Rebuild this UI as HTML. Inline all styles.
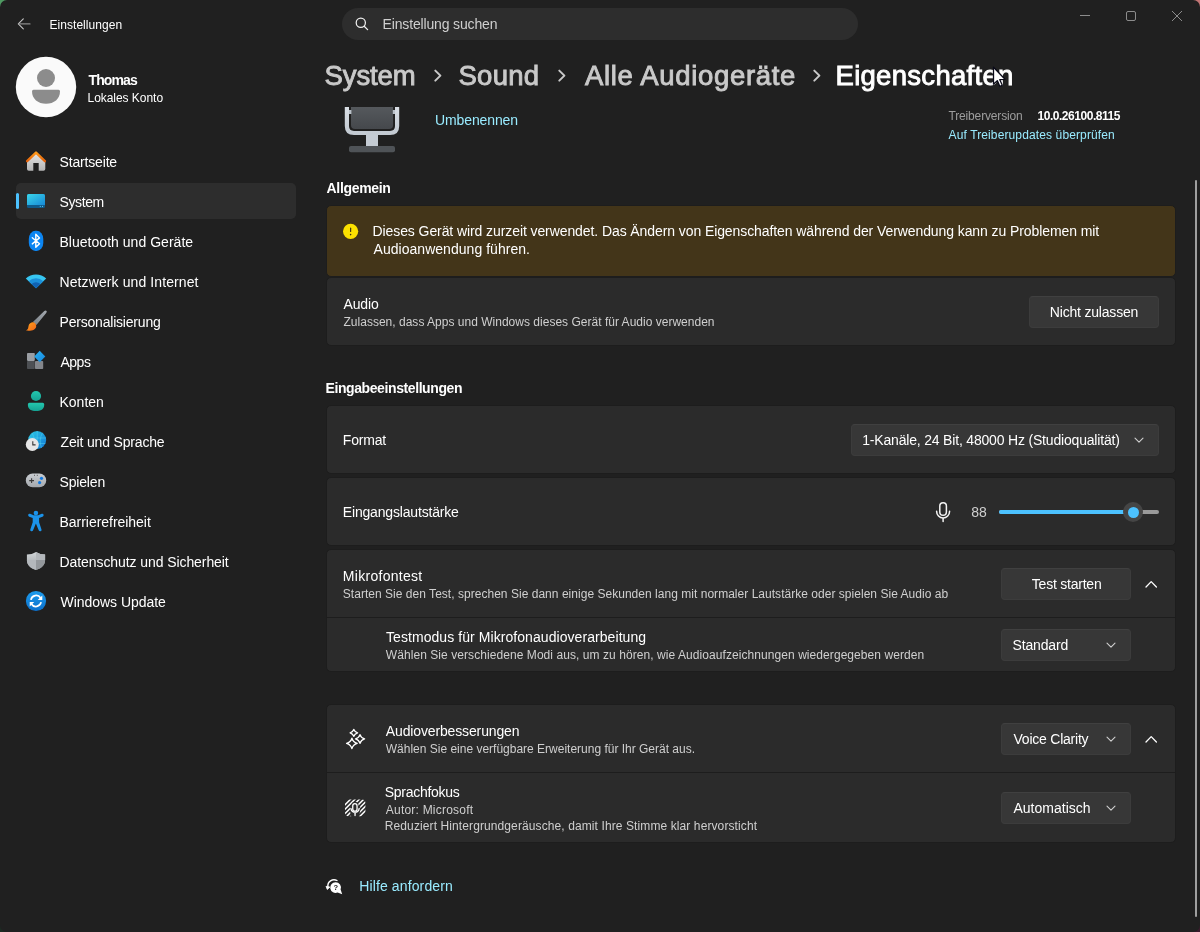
<!DOCTYPE html>
<html lang="de">
<head>
<meta charset="utf-8">
<title>Einstellungen</title>
<style>
html,body{margin:0;padding:0;width:1200px;height:932px;overflow:hidden;background:#202020;font-family:"Liberation Sans",sans-serif;}
#win{position:absolute;left:0;top:0;width:1200px;height:932px;background:#202020;border-radius:7px;overflow:hidden;}
.cn{position:absolute;width:10px;height:10px;}
.t{position:absolute;line-height:40px;white-space:pre;}
.a{position:absolute;}
.card{position:absolute;left:326px;width:850px;background:#2b2b2b;border:1px solid #1d1d1d;box-sizing:border-box;border-radius:5px;}
.btn{position:absolute;background:#373737;border-radius:4px;box-sizing:border-box;border:1px solid #3c3c3c;border-top-color:#404040;}
.div{position:absolute;left:327px;width:848px;height:1px;background:#1d1d1d;}
svg{position:absolute;overflow:visible;}
</style>
</head>
<body>
<div class="cn" style="left:0;top:0;background:#4f9a62"></div>
<div class="cn" style="right:0;top:0;background:#c27575"></div>
<div class="cn" style="left:0;bottom:0;background:#1c2a22"></div>
<div class="cn" style="right:0;bottom:0;background:#3a1a2c"></div>
<div id="win">
<!-- selected nav -->
<div class="a" style="left:16px;top:183px;width:280px;height:36px;border-radius:5px;background:#2d2d2d"></div>
<div class="a" style="left:16px;top:193px;width:3px;height:16px;border-radius:2px;background:#4cc2ff"></div>
<!-- search -->
<div class="a" style="left:342px;top:8px;width:516px;height:32px;border-radius:16px;background:#2d2d2d"></div>
<!-- cards -->
<div class="card" style="top:205px;height:72px;background:#433519"></div>
<div class="card" style="top:277px;height:69px"></div>
<div class="card" style="top:405px;height:69px"></div>
<div class="card" style="top:477px;height:69px"></div>
<div class="card" style="top:549px;height:123px"></div>
<div class="div" style="top:617px"></div>
<div class="card" style="top:704px;height:139px"></div>
<div class="div" style="top:772px"></div>
<!-- buttons -->
<div class="btn" style="left:1029px;top:296px;width:130px;height:32px"></div>
<div class="btn" style="left:851px;top:424px;width:308px;height:32px"></div>
<div class="btn" style="left:1001px;top:568px;width:130px;height:32px"></div>
<div class="btn" style="left:1001px;top:629px;width:130px;height:32px"></div>
<div class="btn" style="left:1001px;top:723px;width:130px;height:32px"></div>
<div class="btn" style="left:1001px;top:792px;width:130px;height:32px"></div>
<!-- slider -->
<div class="a" style="left:999px;top:510px;width:160px;height:4px;border-radius:2px;background:#9a9a9a"></div>
<div class="a" style="left:999px;top:510px;width:134px;height:4px;border-radius:2px;background:#4cc2ff"></div>
<div class="a" style="left:1123px;top:502px;width:20px;height:20px;border-radius:10px;background:#454545"></div>
<div class="a" style="left:1127.5px;top:506.5px;width:11px;height:11px;border-radius:6px;background:#4cc2ff"></div>
<!-- scrollbar -->
<div class="a" style="left:1195px;top:180px;width:2px;height:737px;border-radius:1px;background:#9f9f9f"></div>
<svg style="left:0;top:0;will-change:transform" width="1200" height="932" viewBox="0 0 1200 932">
<defs>
<linearGradient id="gRoof" x1="0" y1="0" x2="0" y2="1"><stop offset="0" stop-color="#ff9a1a"/><stop offset="1" stop-color="#e2600a"/></linearGradient>
<linearGradient id="gHouse" x1="0" y1="0" x2="0" y2="1"><stop offset="0" stop-color="#e6e6e6"/><stop offset="1" stop-color="#b4b4b4"/></linearGradient>
<linearGradient id="gSys" x1="0" y1="0" x2="1" y2="1"><stop offset="0" stop-color="#3ad6ea"/><stop offset="1" stop-color="#1789d6"/></linearGradient>
<linearGradient id="gGlobe" x1="0" y1="0" x2="1" y2="1"><stop offset="0" stop-color="#2ccbe4"/><stop offset="1" stop-color="#1277d6"/></linearGradient>
<linearGradient id="gTeal" x1="0" y1="0" x2="0" y2="1"><stop offset="0" stop-color="#23c7ae"/><stop offset="1" stop-color="#15a293"/></linearGradient>
<linearGradient id="gPad" x1="0" y1="0" x2="0" y2="1"><stop offset="0" stop-color="#c9cdd1"/><stop offset="1" stop-color="#a4a8ad"/></linearGradient>
<linearGradient id="gShield" x1="0" y1="0" x2="0" y2="1"><stop offset="0" stop-color="#d2d6d9"/><stop offset="1" stop-color="#9a9ea1"/></linearGradient>
<linearGradient id="gUpd" x1="0" y1="0" x2="0" y2="1"><stop offset="0" stop-color="#1d9cec"/><stop offset="1" stop-color="#0b6fcb"/></linearGradient>
<linearGradient id="gDia" x1="0" y1="0" x2="1" y2="1"><stop offset="0" stop-color="#2bb4f2"/><stop offset="1" stop-color="#1585de"/></linearGradient>
<linearGradient id="gMicB" x1="0" y1="0" x2="0" y2="1"><stop offset="0" stop-color="#5d6165"/><stop offset="1" stop-color="#45484c"/></linearGradient>
<linearGradient id="gMicU" x1="0" y1="0" x2="0" y2="1"><stop offset="0" stop-color="#dfe4ea"/><stop offset="1" stop-color="#c3cad2"/></linearGradient>
<linearGradient id="gBrush" x1="0" y1="0" x2="1" y2="1"><stop offset="0" stop-color="#ffa41c"/><stop offset="1" stop-color="#f0641a"/></linearGradient>
<linearGradient id="gHandle" x1="1" y1="0" x2="0" y2="1"><stop offset="0" stop-color="#a3a9af"/><stop offset="1" stop-color="#7b8288"/></linearGradient>
<clipPath id="cMic"><rect x="330" y="107" width="100" height="60"/></clipPath>
<clipPath id="cVF"><rect x="345" y="799.6" width="20.4" height="16.6" rx="4"/></clipPath>
</defs>
<!-- back arrow -->
<path d="M23.3 18.9 L18.3 23.9 L23.3 28.9" fill="none" stroke="#c8c8c8" stroke-width="1.1" stroke-linecap="round" stroke-linejoin="round"/>
<path d="M19 23.9 H30" fill="none" stroke="#8a8a8a" stroke-width="1.1" stroke-linecap="round"/>
<!-- avatar -->
<circle cx="46" cy="87" r="30.2" fill="#fafafa"/>
<circle cx="46" cy="78" r="9" fill="#8c8c8c"/>
<path d="M33.5 89.8 H58.5 Q60 89.8 60 91.3 C60 99 54 103.8 46 103.8 C38 103.8 32 99 32 91.3 Q32 89.8 33.5 89.8 Z" fill="#8c8c8c"/>
<!-- window controls -->
<path d="M1080 15.5 H1090" stroke="#8c8c8c" stroke-width="1"/>
<rect x="1126.5" y="11.5" width="9" height="9" rx="1.5" fill="none" stroke="#8c8c8c" stroke-width="1"/>
<path d="M1172 11 L1182 21 M1182 11 L1172 21" stroke="#8c8c8c" stroke-width="1"/>
<!-- search icon -->
<circle cx="360.8" cy="22.8" r="4.6" fill="none" stroke="#f0f0f0" stroke-width="1.25"/>
<path d="M364.2 26.2 L367.6 29.6" stroke="#f0f0f0" stroke-width="1.3" stroke-linecap="round"/>
<!-- home -->
<path d="M27 161 L36 153 L45.3 161 V169 Q45.3 170.8 43.5 170.8 H38.7 V163 H33.3 V170.8 H28.8 Q27 170.8 27 169 Z" fill="url(#gHouse)"/>
<path d="M27.1 161.2 L36 152.6 L44.9 161.2" fill="none" stroke="url(#gRoof)" stroke-width="2.4" stroke-linecap="round" stroke-linejoin="round"/>
<!-- system -->
<rect x="27" y="194" width="18" height="14" rx="1.6" fill="#0f5a8a"/>
<path d="M28.6 194 H43.4 Q45 194 45 195.6 V205 H27 V195.6 Q27 194 28.6 194 Z" fill="url(#gSys)"/>
<rect x="39.8" y="205.9" width="1" height="1" fill="#5ec8f0"/><rect x="42" y="205.9" width="1" height="1" fill="#5ec8f0"/>
<!-- bluetooth -->
<rect x="28.8" y="230.8" width="14.5" height="20.2" rx="6.6" ry="8.2" fill="#0c85f2"/>
<path d="M32.3 237.8 L39.5 243.8 L35.8 247.3 V234.3 L39.5 237.9 L32.3 243.9" fill="none" stroke="#fff" stroke-width="1.4" stroke-linejoin="round" stroke-linecap="round"/>
<!-- wifi -->
<path d="M36 288.3 L25.8 278.6 A14.6 14.6 0 0 1 46.2 278.6 Z" fill="#37c6f2"/>
<path d="M36 288.3 L28.7 281.3 A10.4 10.4 0 0 1 43.3 281.3 Z" fill="#1c8fda"/>
<path d="M36 288.3 L31.6 284.1 A6.2 6.2 0 0 1 40.4 284.1 Z" fill="#1162b2"/>
<!-- brush -->
<path d="M44.3 310.9 Q45.7 309.9 46.6 311 Q47.2 311.8 46.2 312.9 L36.4 325.1 L32.9 322.1 Z" fill="url(#gHandle)"/>
<path d="M31.6 322.4 C34 321.6 36.6 323.4 36.2 326.4 C35.8 329.6 32 331.2 26 330.6 C28.4 329.4 28.2 327.6 28.6 325.8 C29 323.8 30 322.9 31.6 322.4 Z" fill="url(#gBrush)"/>
<!-- apps -->
<rect x="27" y="353" width="7.8" height="7.9" rx="0.8" fill="#9a9ea3"/>
<rect x="27" y="361" width="7.8" height="8" rx="0.8" fill="#4d5054"/>
<rect x="35" y="361" width="8.2" height="8" rx="0.8" fill="#83868b"/>
<path d="M39.7 350.8 L45.3 356.5 L39.7 362.2 L34.2 356.5 Z" fill="url(#gDia)"/>
<!-- konten -->
<circle cx="36" cy="396" r="5.1" fill="url(#gTeal)"/>
<path d="M29.4 402.8 H42.7 Q44.2 402.8 44.2 404.3 V404.9 C44.2 409 40.6 411.1 36 411.1 C31.4 411.1 27.9 409 27.9 404.9 V404.3 Q27.9 402.8 29.4 402.8 Z" fill="url(#gTeal)"/>
<!-- zeit und sprache -->
<circle cx="37.2" cy="440" r="9" fill="url(#gGlobe)"/>
<path d="M28.4 438 H46 M37.2 431 V449 M29 443.5 H45.4 M32 432.7 Q36 440 33 448 M42.5 432.7 Q38.5 440 41.5 448" fill="none" stroke="#56d2ee" stroke-width="0.7" opacity="0.7"/>
<circle cx="32.3" cy="444.5" r="6.5" fill="#e6e6e6"/>
<path d="M32.8 441.2 V444.9 H35.6" fill="none" stroke="#3a3a3a" stroke-width="1.1"/>
<!-- spielen -->
<rect x="25.8" y="473.6" width="20.4" height="13.6" rx="6.8" fill="url(#gPad)"/>
<path d="M29.2 480.6 H34 M31.6 478.2 V483" stroke="#3c3c3c" stroke-width="1.1"/>
<circle cx="41.5" cy="478.3" r="1.6" fill="#1279e0"/><circle cx="39.6" cy="482.6" r="1.6" fill="#1279e0"/>
<rect x="34" y="474.8" width="1" height="1" fill="#555"/><rect x="36.8" y="474.8" width="1" height="1" fill="#555"/>
<!-- barrierefreiheit -->
<circle cx="35.9" cy="513" r="2.3" fill="#1b93ea"/>
<path d="M28.2 514.7 Q28.6 513.3 30.1 513.8 L33.6 515.3 H38.2 L41.7 513.8 Q43.2 513.3 43.6 514.7 Q43.9 516.1 42.5 516.7 L39.1 518.1 V522.3 L41.5 529.4 Q41.9 530.9 40.5 531.3 Q39.2 531.6 38.7 530.3 L35.9 523.4 L33.1 530.3 Q32.6 531.6 31.3 531.3 Q29.9 530.9 30.3 529.4 L32.7 522.3 V518.1 L29.3 516.7 Q27.9 516.1 28.2 514.7 Z" fill="#1b93ea"/>
<!-- shield -->
<path d="M36 551.9 C38.6 553.6 42 554.4 45.1 554.4 V560 C45.1 565 41.4 568.4 36 569.9 C30.6 568.4 26.9 565 26.9 560 V554.4 C30 554.4 33.4 553.6 36 551.9 Z" fill="url(#gShield)"/>
<path d="M36 551.9 C38.6 553.6 42 554.4 45.1 554.4 V560 H36 Z" fill="#b3b7bb"/>
<path d="M36 560 H26.9 C26.9 565 30.6 568.4 36 569.9 Z" fill="#b4b8bc"/><path d="M36 560 H45.1 C45.1 565 41.4 568.4 36 569.9 Z" fill="#94989c"/>
<!-- windows update -->
<circle cx="36" cy="601" r="10.1" fill="url(#gUpd)"/>
<path d="M30.9 599.8 A5.3 5.3 0 0 1 40.6 598 M41.1 602.2 A5.3 5.3 0 0 1 31.4 604" fill="none" stroke="#fff" stroke-width="1.7"/>
<path d="M42.3 595.4 V600 H37.7 Z M29.7 606.6 V602 H34.3 Z" fill="#fff"/>
<!-- breadcrumb chevrons -->
<g fill="none" stroke="#c9c9c9" stroke-width="2" stroke-linecap="round" stroke-linejoin="round">
<path d="M435.3 70.6 L440.4 75.6 L435.3 80.6"/><path d="M559.3 70.6 L564.4 75.6 L559.3 80.6"/><path d="M814.3 70.6 L819.4 75.6 L814.3 80.6"/>
</g>
<!-- big microphone image (clipped by header) -->
<g clip-path="url(#cMic)">
<rect x="351" y="96" width="42.1" height="33" rx="4" fill="url(#gMicB)"/>
<rect x="349" y="110" width="2.4" height="4" fill="#b9c0c8"/><rect x="392.8" y="110" width="2.4" height="4" fill="#b9c0c8"/>
<path d="M346.9 100 V126 Q346.9 133 354 133 H390 Q397.1 133 397.1 126 V100" fill="none" stroke="url(#gMicU)" stroke-width="4.2"/>
<rect x="366" y="134.5" width="12" height="12" fill="#c4cbd3"/>
<rect x="349" y="146" width="46" height="6.2" rx="2" fill="#4f5357"/>
</g>
<!-- warning icon -->
<circle cx="350.6" cy="231.3" r="7.6" fill="#fce100"/>
<rect x="350.05" y="227.6" width="1.15" height="4.4" rx="0.55" fill="#3a2f12"/><circle cx="350.62" cy="234.6" r="0.8" fill="#3a2f12"/>
<!-- dropdown chevrons -->
<g fill="none" stroke="#cfcfcf" stroke-width="1.1" stroke-linecap="round" stroke-linejoin="round">
<path d="M1135 438.2 L1139 442.2 L1143 438.2"/>
<path d="M1107 643.2 L1111 647.2 L1115 643.2"/>
<path d="M1107 737.2 L1111 741.2 L1115 737.2"/>
<path d="M1107 806.2 L1111 810.2 L1115 806.2"/>
</g>
<g fill="none" stroke="#ffffff" stroke-width="1.3" stroke-linecap="round" stroke-linejoin="round">
<path d="M1146 587 L1151.2 581.6 L1156.4 587"/>
<path d="M1146 742 L1151.2 736.6 L1156.4 742"/>
</g>
<!-- slider mic icon -->
<g fill="none" stroke="#f4f4f4" stroke-width="1.5" stroke-linecap="round">
<rect x="939.8" y="502.7" width="6.6" height="12.6" rx="3.3"/>
<path d="M936.6 511.2 A6.5 6.8 0 0 0 949.6 511.2"/>
<path d="M943.1 518.4 V521.4"/>
</g>
<!-- sparkle -->
<g fill="none" stroke="#fff" stroke-width="1.35" stroke-linejoin="round">
<path d="M353.8 729.4 Q354.6 732 357.6 732.8 Q354.6 733.6 353.8 736.4 Q353 733.6 350.1 732.8 Q353 732 353.8 729.4 Z"/>
<path d="M360 734.6 Q361 738 364.6 738.9 Q361 739.8 360 743.4 Q359 739.8 355.5 738.9 Q359 738 360 734.6 Z"/>
<path d="M351.9 738.2 Q353.1 742.2 357.2 743.4 Q353.1 744.6 351.9 748.6 Q350.7 744.6 346.6 743.4 Q350.7 742.2 351.9 738.2 Z"/>
</g>
<!-- voice focus -->
<mask id="mVF" maskUnits="userSpaceOnUse" x="340" y="795" width="30" height="26">
<rect x="345" y="799.6" width="20.4" height="16.6" rx="3.6" fill="#fff"/>
<rect x="351.4" y="801.7" width="7.1" height="11" rx="3.5" fill="#000"/>
<path d="M349.9 806.2 H360.2 V811 L358.6 817 H351.4 L349.9 811 Z" fill="#000"/>
</mask>
<path d="M319.80 830 L359.80 790 M324.20 830 L364.20 790 M328.60 830 L368.60 790 M333.00 830 L373.00 790 M337.40 830 L377.40 790 M341.80 830 L381.80 790 M346.20 830 L386.20 790" stroke="#fff" stroke-width="1.55" fill="none" mask="url(#mVF)"/>
<g fill="none" stroke="#fff" stroke-width="1.3" stroke-linecap="round">
<rect x="352.75" y="803.65" width="4.3" height="7.5" rx="2.15"/>
<path d="M350.9 808.3 A4.2 4.6 0 0 0 359.2 808.3"/>
<path d="M355.05 813.2 V815.5"/>
</g>
<!-- help icon -->
<path d="M335.6 882.2 A5.4 5.4 0 0 1 340.6 889.6 L342.2 894.2 L337.6 892.6 A5.4 5.4 0 1 1 335.6 882.2 Z" fill="#fff"/>
<path d="M337 880.5 A6.2 6.2 0 0 0 327.9 886.8" fill="none" stroke="#fff" stroke-width="1.4" stroke-linecap="round"/>
<path d="M326 886.3 L329.9 887.1 L327.3 889.5 Z" fill="#fff" stroke="#fff" stroke-width="0.8" stroke-linejoin="round"/>
<text x="335.7" y="890.3" font-family="Liberation Sans, sans-serif" font-size="7.5" font-weight="700" fill="#202020" text-anchor="middle">?</text>
</svg>

<div id="tx" style="position:absolute;left:0;top:0;width:1200px;height:932px;will-change:transform">
<span class="t" style="left:49.50px;top:5.00px;font-size:12px;font-weight:400;color:#ffffff;letter-spacing:0.042px">Einstellungen</span>
<span class="t" style="left:88.50px;top:60.00px;font-size:14px;font-weight:700;color:#ffffff;letter-spacing:-0.900px">Thomas</span>
<span class="t" style="left:87.50px;top:78.00px;font-size:12px;font-weight:400;color:#ffffff;letter-spacing:-0.042px">Lokales Konto</span>
<span class="t" style="left:59.50px;top:142.00px;font-size:14px;font-weight:400;color:#ffffff;letter-spacing:-0.167px">Startseite</span>
<span class="t" style="left:59.50px;top:182.00px;font-size:14px;font-weight:400;color:#ffffff;letter-spacing:-0.400px">System</span>
<span class="t" style="left:59.50px;top:222.00px;font-size:14px;font-weight:400;color:#ffffff;letter-spacing:0.026px">Bluetooth und Geräte</span>
<span class="t" style="left:59.50px;top:262.00px;font-size:14px;font-weight:400;color:#ffffff;letter-spacing:0.100px">Netzwerk und Internet</span>
<span class="t" style="left:59.50px;top:302.00px;font-size:14px;font-weight:400;color:#ffffff;letter-spacing:-0.200px">Personalisierung</span>
<span class="t" style="left:60.50px;top:342.00px;font-size:14px;font-weight:400;color:#ffffff;letter-spacing:-0.500px">Apps</span>
<span class="t" style="left:59.50px;top:382.00px;font-size:14px;font-weight:400;color:#ffffff;letter-spacing:0.000px">Konten</span>
<span class="t" style="left:60.50px;top:422.00px;font-size:14px;font-weight:400;color:#ffffff;letter-spacing:-0.167px">Zeit und Sprache</span>
<span class="t" style="left:59.50px;top:462.00px;font-size:14px;font-weight:400;color:#ffffff;letter-spacing:-0.167px">Spielen</span>
<span class="t" style="left:59.50px;top:502.00px;font-size:14px;font-weight:400;color:#ffffff;letter-spacing:-0.033px">Barrierefreiheit</span>
<span class="t" style="left:59.50px;top:542.00px;font-size:14px;font-weight:400;color:#ffffff;letter-spacing:-0.080px">Datenschutz und Sicherheit</span>
<span class="t" style="left:60.50px;top:582.00px;font-size:14px;font-weight:400;color:#ffffff;letter-spacing:-0.038px">Windows Update</span>
<span class="t" style="left:382.50px;top:4.00px;font-size:14px;font-weight:400;color:#cfcfcf;letter-spacing:-0.147px">Einstellung suchen</span>
<span class="t" style="left:324.50px;top:56.00px;font-size:27.5px;font-weight:400;color:#c9c9c9;letter-spacing:-0.100px;-webkit-text-stroke:0.9px #c9c9c9">System</span>
<span class="t" style="left:458.50px;top:56.00px;font-size:27.5px;font-weight:400;color:#c9c9c9;letter-spacing:0.250px;-webkit-text-stroke:0.9px #c9c9c9">Sound</span>
<span class="t" style="left:585.00px;top:56.00px;font-size:27.5px;font-weight:400;color:#c9c9c9;letter-spacing:0.667px;-webkit-text-stroke:0.9px #c9c9c9">Alle Audiogeräte</span>
<span class="t" style="left:835.50px;top:56.00px;font-size:27.5px;font-weight:400;color:#ffffff;letter-spacing:0.292px;-webkit-text-stroke:0.9px #ffffff">Eigenschaften</span>
<span class="t" style="left:435.00px;top:100.00px;font-size:14px;font-weight:400;color:#99ebff;letter-spacing:-0.111px">Umbenennen</span>
<span class="t" style="left:948.50px;top:96.00px;font-size:12px;font-weight:400;color:#9d9d9d;letter-spacing:-0.154px">Treiberversion</span>
<span class="t" style="left:1037.50px;top:96.00px;font-size:12px;font-weight:700;color:#ffffff;letter-spacing:-0.464px">10.0.26100.8115</span>
<span class="t" style="left:948.50px;top:115.30px;font-size:12px;font-weight:400;color:#99ebff;letter-spacing:0.125px">Auf Treiberupdates überprüfen</span>
<span class="t" style="left:326.50px;top:168.00px;font-size:14px;font-weight:700;color:#ffffff;letter-spacing:-0.312px">Allgemein</span>
<span class="t" style="left:372.50px;top:210.60px;font-size:14px;font-weight:400;color:#ffffff;letter-spacing:-0.087px">Dieses Gerät wird zurzeit verwendet. Das Ändern von Eigenschaften während der Verwendung kann zu Problemen mit</span>
<span class="t" style="left:373.50px;top:228.80px;font-size:14px;font-weight:400;color:#ffffff;letter-spacing:0.038px">Audioanwendung führen.</span>
<span class="t" style="left:343.50px;top:283.80px;font-size:14px;font-weight:400;color:#ffffff;letter-spacing:-0.125px">Audio</span>
<span class="t" style="left:343.50px;top:302.00px;font-size:12px;font-weight:400;color:#cfcfcf;letter-spacing:0.013px">Zulassen, dass Apps und Windows dieses Gerät für Audio verwenden</span>
<span class="t" style="left:1049.80px;top:292.00px;font-size:14px;font-weight:400;color:#ffffff;letter-spacing:-0.192px">Nicht zulassen</span>
<span class="t" style="left:325.50px;top:367.50px;font-size:14px;font-weight:700;color:#ffffff;letter-spacing:-0.405px">Eingabeeinstellungen</span>
<span class="t" style="left:342.80px;top:420.00px;font-size:14px;font-weight:400;color:#ffffff;letter-spacing:-0.200px">Format</span>
<span class="t" style="left:862.20px;top:420.00px;font-size:14px;font-weight:400;color:#ffffff;letter-spacing:-0.183px">1-Kanäle, 24 Bit, 48000 Hz (Studioqualität)</span>
<span class="t" style="left:342.80px;top:492.00px;font-size:14px;font-weight:400;color:#ffffff;letter-spacing:-0.176px">Eingangslautstärke</span>
<span class="t" style="left:971.30px;top:492.00px;font-size:14px;font-weight:400;color:#cfcfcf;letter-spacing:0.000px">88</span>
<span class="t" style="left:342.80px;top:556.00px;font-size:14px;font-weight:400;color:#ffffff;letter-spacing:0.291px">Mikrofontest</span>
<span class="t" style="left:342.80px;top:574.00px;font-size:12px;font-weight:400;color:#cfcfcf;letter-spacing:0.029px">Starten Sie den Test, sprechen Sie dann einige Sekunden lang mit normaler Lautstärke oder spielen Sie Audio ab</span>
<span class="t" style="left:1031.80px;top:564.00px;font-size:14px;font-weight:400;color:#ffffff;letter-spacing:-0.227px">Test starten</span>
<span class="t" style="left:386.00px;top:617.00px;font-size:14px;font-weight:400;color:#ffffff;letter-spacing:0.066px">Testmodus für Mikrofonaudioverarbeitung</span>
<span class="t" style="left:385.80px;top:635.00px;font-size:12px;font-weight:400;color:#cfcfcf;letter-spacing:0.067px">Wählen Sie verschiedene Modi aus, um zu hören, wie Audioaufzeichnungen wiedergegeben werden</span>
<span class="t" style="left:1012.50px;top:625.00px;font-size:14px;font-weight:400;color:#ffffff;letter-spacing:-0.143px">Standard</span>
<span class="t" style="left:385.80px;top:711.30px;font-size:14px;font-weight:400;color:#ffffff;letter-spacing:-0.139px">Audioverbesserungen</span>
<span class="t" style="left:385.80px;top:729.00px;font-size:12px;font-weight:400;color:#cfcfcf;letter-spacing:-0.005px">Wählen Sie eine verfügbare Erweiterung für Ihr Gerät aus.</span>
<span class="t" style="left:1013.50px;top:719.30px;font-size:14px;font-weight:400;color:#ffffff;letter-spacing:-0.225px">Voice Clarity</span>
<span class="t" style="left:384.80px;top:772.00px;font-size:14px;font-weight:400;color:#ffffff;letter-spacing:-0.280px">Sprachfokus</span>
<span class="t" style="left:385.80px;top:790.30px;font-size:12px;font-weight:400;color:#cfcfcf;letter-spacing:0.213px">Autor: Microsoft</span>
<span class="t" style="left:384.80px;top:806.00px;font-size:12px;font-weight:400;color:#cfcfcf;letter-spacing:0.102px">Reduziert Hintergrundgeräusche, damit Ihre Stimme klar hervorsticht</span>
<span class="t" style="left:1013.50px;top:788.00px;font-size:14px;font-weight:400;color:#ffffff;letter-spacing:0.000px">Automatisch</span>
<span class="t" style="left:359.20px;top:866.00px;font-size:14px;font-weight:400;color:#99ebff;letter-spacing:0.129px">Hilfe anfordern</span>
</div>
<svg style="left:0;top:0" width="1200" height="932" viewBox="0 0 1200 932">
<!-- mouse cursor -->
<path d="M993.5 67.2 V84.2 L997.3 80.6 L999.9 86.4 L1002.3 85.3 L999.8 79.7 L1005 79.3 Z" fill="#fff" stroke="#0a0a18" stroke-width="1.3" stroke-linejoin="round"/>
</svg>

</div>
</body>
</html>
